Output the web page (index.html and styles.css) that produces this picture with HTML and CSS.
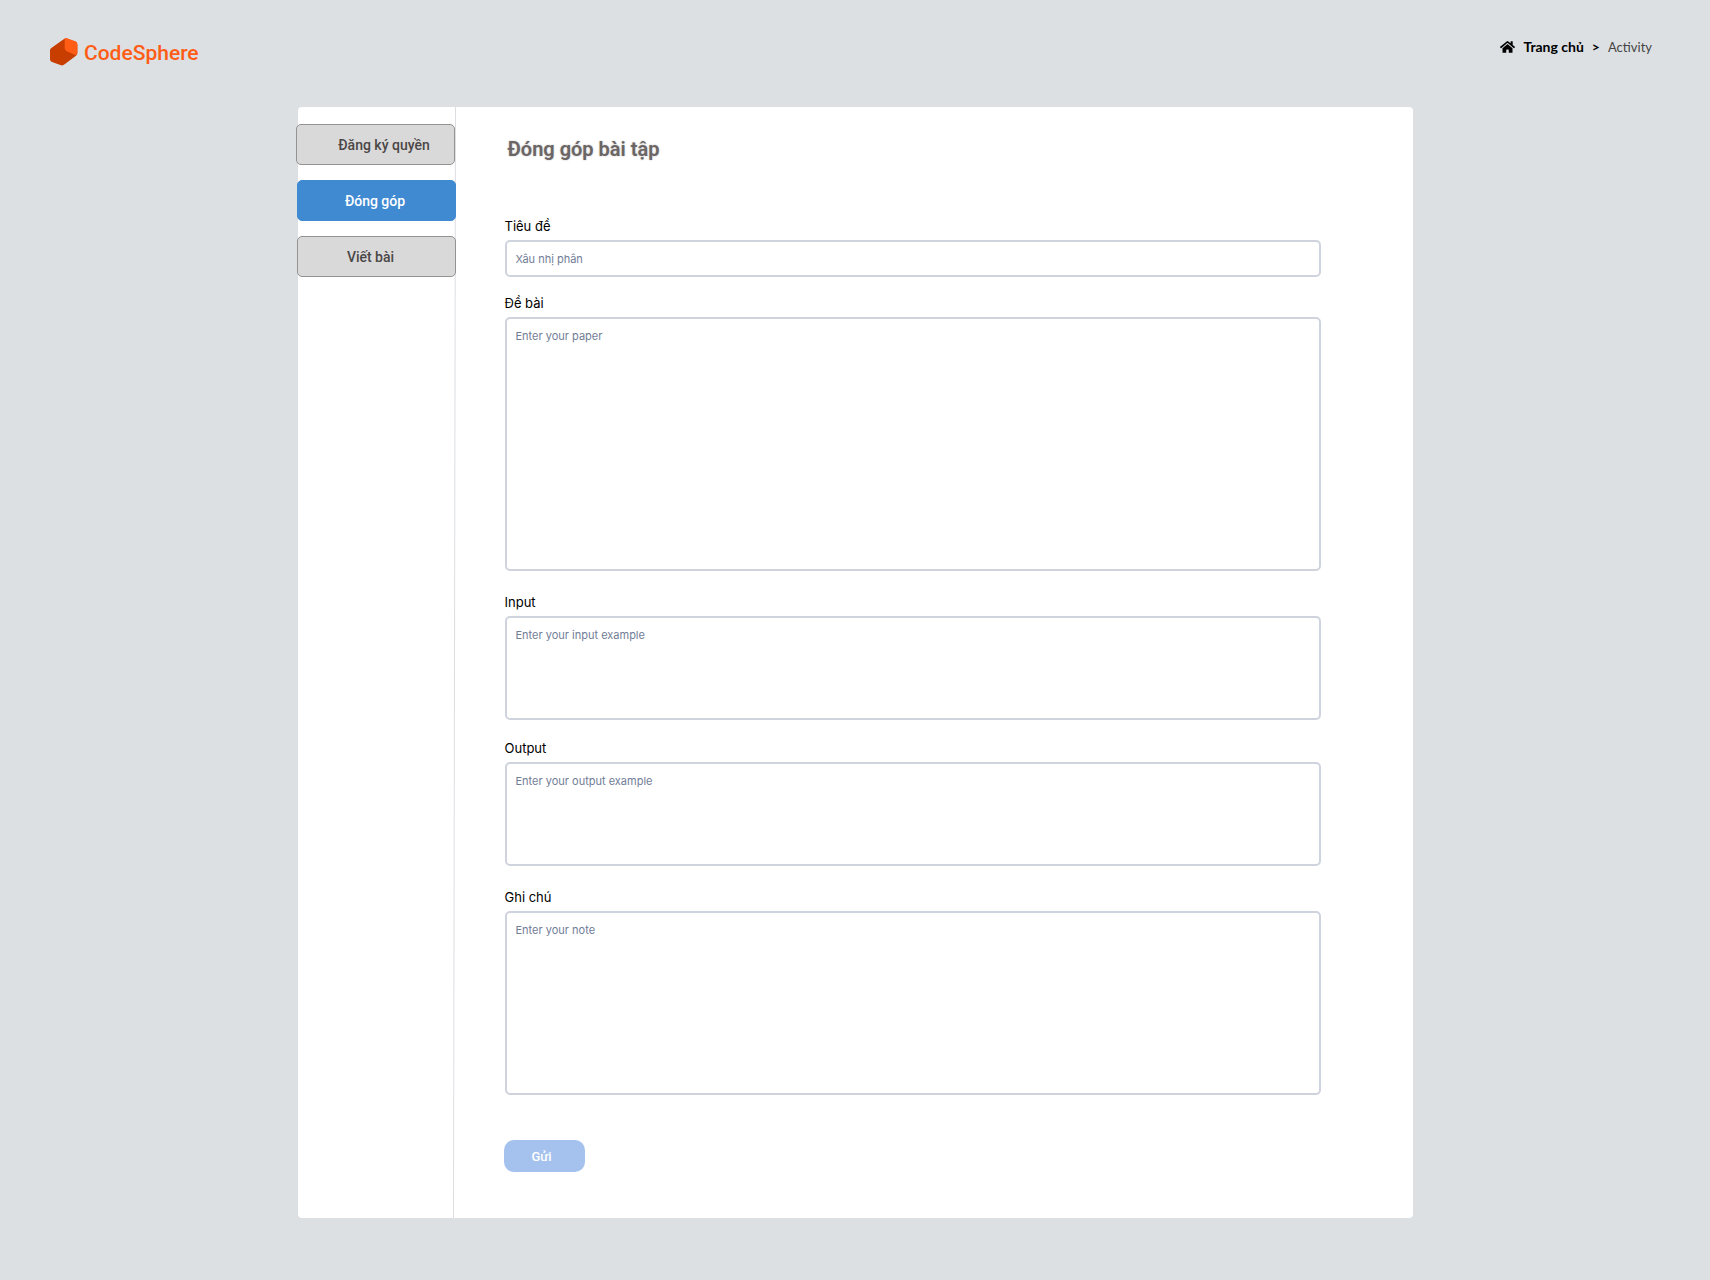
FILE: index.html
```html
<!DOCTYPE html>
<html lang="vi">
<head>
<meta charset="utf-8">
<meta name="viewport" content="width=device-width, initial-scale=1">
<title>CodeSphere</title>
<link rel="stylesheet" href="styles.css">
</head>
<body>
<header class="topbar">
  <a class="brand" href="#">
    <svg class="brand-mark" viewBox="0 0 84 84" aria-hidden="true">
      <path fill="#c73e00" d="M42 3Q46 0 51 2L76 11Q82 13 82 20V45Q82 50 78 53L44 79Q38 84 31 81L6 72Q0 70 0 64V37Q0 33 4 30Z"/>
      <path fill="#ff5c16" d="M44 1Q47 -1 51 1L76 10Q82 12 82 19V45Q82 50 78 52L50 40Q44 37 44 31Z"/>
    </svg>
    <span class="brand-name">CodeSphere</span>
  </a>
  <nav class="breadcrumb" aria-label="Breadcrumb">
    <svg class="home-icon" viewBox="0 0 576 512" aria-hidden="true"><path d="M280 148 96 300v164a16 16 0 0 0 16 16l112-1a16 16 0 0 0 16-16v-95a16 16 0 0 1 16-16h64a16 16 0 0 1 16 16v95a16 16 0 0 0 16 16l112 1a16 16 0 0 0 16-16V300L296 148a12 12 0 0 0-16 0zM572 251l-84-69V44a12 12 0 0 0-12-12h-56a12 12 0 0 0-12 12v72l-90-74a48 48 0 0 0-61 0L4 251a12 12 0 0 0-1 17l25 31a12 12 0 0 0 17 2l235-194a12 12 0 0 1 16 0l235 194a12 12 0 0 0 17-2l25-31a12 12 0 0 0-1-17z"/></svg>
    <a class="crumb crumb-home" href="#">Trang chủ</a>
    <span class="crumb-separator">&gt;</span>
    <span class="crumb">Activity</span>
  </nav>
</header>
<main class="card">
  <nav class="sidebar" aria-label="Menu">
    <button class="tab tab-wide" type="button">Đăng ký quyền</button>
    <button class="tab tab-active" type="button">Đóng góp</button>
    <button class="tab" type="button">Viết bài</button>
  </nav>
  <svg class="divider" viewBox="0 0 3 100" preserveAspectRatio="none" aria-hidden="true"><path d="M2 0H3L1 100H0Z"/></svg>
  <form class="content">
    <h1 class="title">Đóng góp bài tập</h1>
    <div class="field">
      <label for="title">Tiêu đề</label>
      <input class="control" id="title" type="text" placeholder="Xâu nhị phân">
    </div>
    <div class="field">
      <label for="paper">Đề bài</label>
      <textarea class="control control-large" id="paper" placeholder="Enter your paper"></textarea>
    </div>
    <div class="field field-spaced">
      <label for="input">Input</label>
      <textarea class="control control-small" id="input" placeholder="Enter your input example"></textarea>
    </div>
    <div class="field field-paired">
      <label for="output">Output</label>
      <textarea class="control control-small" id="output" placeholder="Enter your output example"></textarea>
    </div>
    <div class="field field-spaced">
      <label for="note">Ghi chú</label>
      <textarea class="control control-medium" id="note" placeholder="Enter your note"></textarea>
    </div>
    <button class="submit" type="submit">Gửi</button>
  </form>
</main>
</body>
</html>
```
FILE: styles.css
```css
* {
  box-sizing: border-box;
}

body {
  margin: 0;
  min-height: 100vh;
  background: #dce0e3;
  color: #000;
  font-family: Inter, "Noto Sans", sans-serif;
  font-size: 13px;
}

button,
input,
textarea {
  font: inherit;
}

.topbar {
  display: flex;
  justify-content: space-between;
  align-items: flex-start;
  height: 107px;
  padding: 36px 58px 0 50px;
}

.brand {
  display: flex;
  align-items: center;
  gap: 6px;
  color: #ff5c16;
  text-decoration: none;
}

.brand-mark {
  width: 28px;
  height: 28px;
}

.brand-name {
  padding-top: 2px;
  font-family: Roboto, sans-serif;
  font-size: 21px;
  font-weight: 500;
  line-height: 30px;
}

.breadcrumb {
  display: flex;
  align-items: center;
  gap: 8px;
  color: #444;
  font-family: Lato, "Open Sans", sans-serif;
  font-size: 13px;
  line-height: 22px;
}

.home-icon {
  width: 15px;
  height: 14px;
  fill: #000;
}

.crumb {
  color: inherit;
  text-decoration: none;
}

.crumb-home,
.crumb-separator {
  color: #000;
  font-size: 14px;
  font-weight: 700;
}

.card {
  display: flex;
  max-width: 1115px;
  margin: 0 auto 62px;
  border-radius: 4px;
  background: #fff;
}

.sidebar {
  display: flex;
  flex: 0 0 155px;
  flex-direction: column;
  gap: 15px;
  min-width: 0;
  padding-top: 17px;
}

.tab {
  z-index: 1;
  width: 159px;
  height: 41px;
  margin-left: -1px;
  padding: 0 11px 0 0;
  border: 1px solid #959292;
  border-radius: 5px;
  background: #d9d9d9;
  color: #4b4747;
  font-family: Roboto, sans-serif;
  font-size: 14px;
  font-weight: 500;
}

.tab-wide {
  margin-left: -2px;
  padding: 0 0 0 18px;
}

.tab-active {
  padding: 0 2px 0 0;
  border-color: #408ad2;
  background: #408ad2;
  color: #fff;
}

.divider {
  flex: none;
  align-self: stretch;
  width: 3px;
  height: auto;
  fill: #dcdee2;
}

.content {
  flex: 1;
  padding: 29px 92px 46px 49px;
}

.title {
  margin: 0 0 54px;
  padding-left: 3px;
  color: #6b6565;
  font-family: Roboto, sans-serif;
  font-size: 20px;
  font-weight: 600;
  line-height: 26px;
  text-shadow: 0 0 2px #bbb;
}

.field {
  display: flex;
  flex-direction: column;
  gap: 4px;
  margin-bottom: 16px;
}

.field-paired {
  margin-top: 18px;
}

.field-spaced {
  margin-top: 21px;
}

.field label {
  line-height: 20px;
}

.control {
  display: block;
  width: 100%;
  height: 37px;
  padding: 9px;
  border: 2px solid #cfd3de;
  border-radius: 5px;
  background: #fff;
  color: #2d3748;
  font-size: 11px;
  line-height: 17px;
  resize: none;
}

.control::placeholder {
  color: #717d96;
  opacity: 1;
}

.control-small {
  height: 104px;
}

.control-medium {
  height: 184px;
}

.control-large {
  height: 254px;
}

.submit {
  display: block;
  width: 81px;
  height: 32px;
  margin: 45px 0 0 -1px;
  padding: 0 5px 0 0;
  border: 0;
  border-radius: 10px;
  background: #a4c2ed;
  color: #fff;
  font-family: Roboto, sans-serif;
  font-size: 13px;
  font-weight: 500;
}
```
